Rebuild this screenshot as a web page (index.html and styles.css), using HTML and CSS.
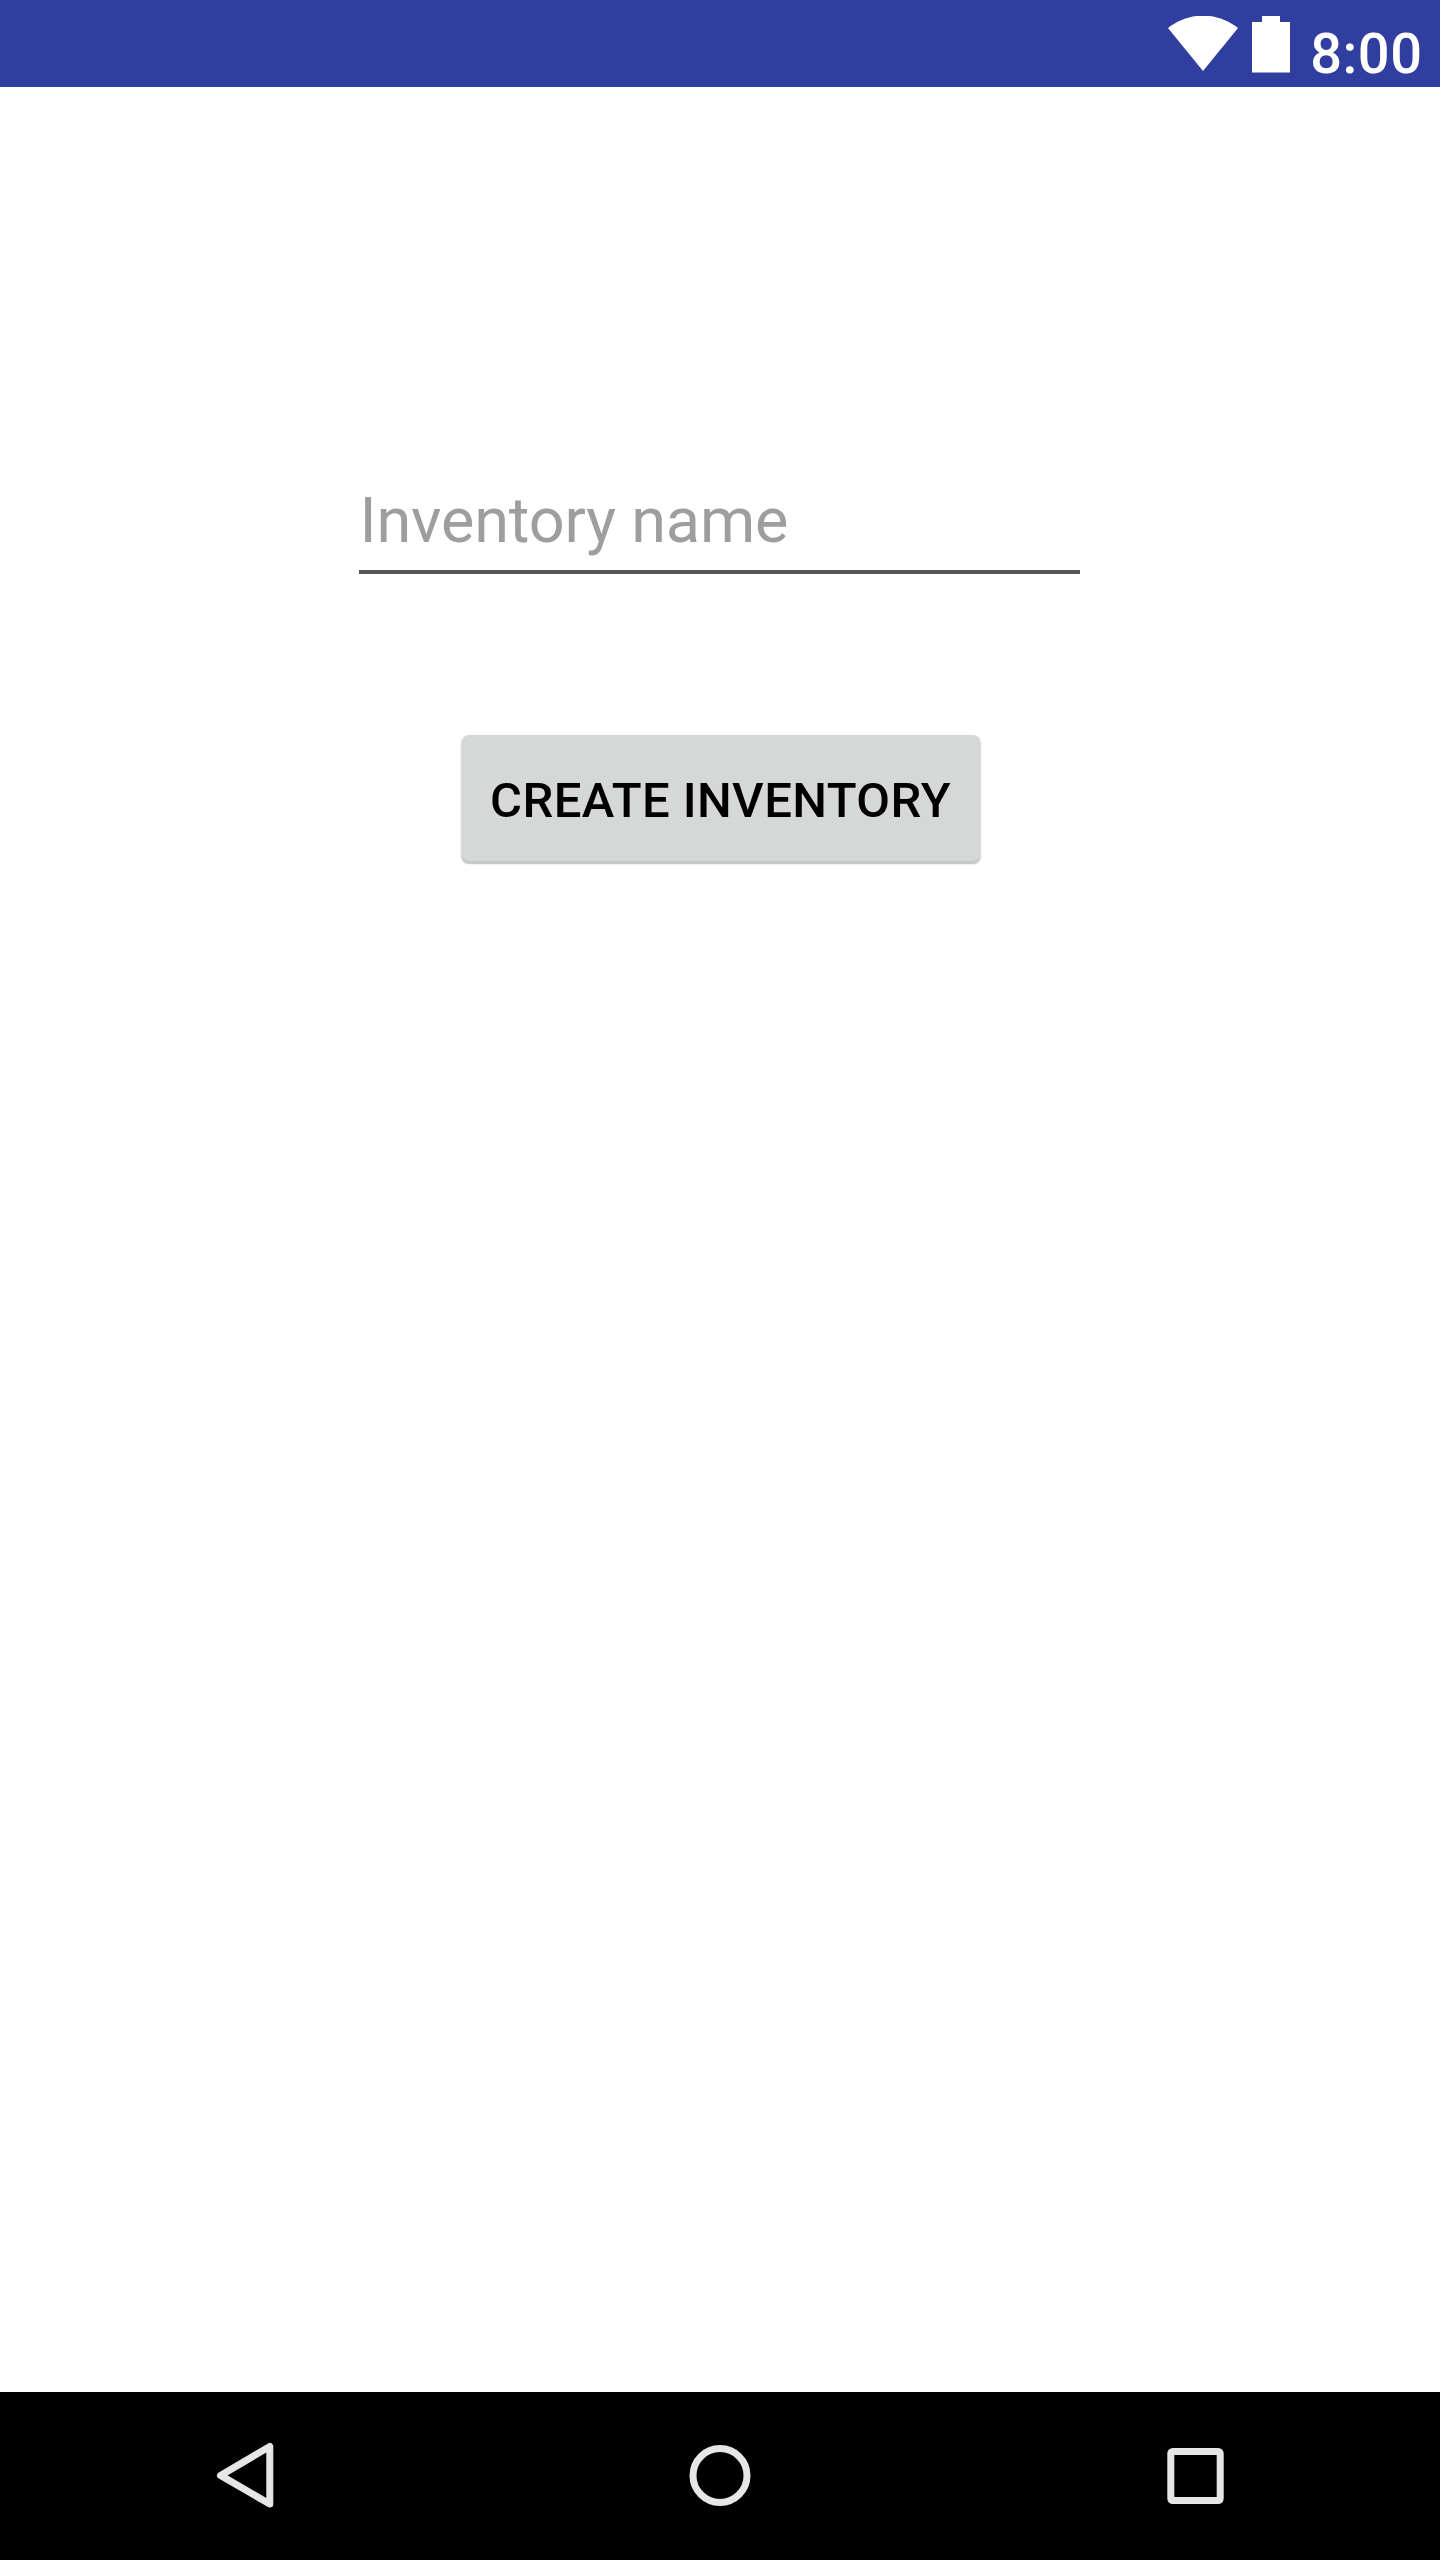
FILE: index.html
```html
<!DOCTYPE html>
<html lang="en">
<head>
<meta charset="utf-8">
<title>Create inventory</title>
<link rel="stylesheet" href="styles.css">
</head>
<body>
<header class="status-bar">
  <svg class="wifi" width="70" height="56" viewBox="0 0 70 56"><path d="M0 12C21-4.5 49-4.5 70 12L35 55Z"/></svg>
  <svg class="battery" width="38" height="57" viewBox="0 0 38 57"><path d="M10 0h18v6h10v50.5H0V6h10z"/></svg>
  <span class="clock">8:00</span>
</header>
<main class="content">
  <input class="name-field" type="text" placeholder="Inventory name" aria-label="Inventory name">
  <button class="create-button" type="button">CREATE INVENTORY</button>
</main>
<nav class="nav-bar">
  <svg class="nav-icon" width="84" height="84" viewBox="0 0 84 84"><path d="M66.8 12.5V70L17.5 41.4z"/></svg>
  <svg class="nav-icon" width="84" height="84" viewBox="0 0 84 84"><circle cx="42" cy="41.5" r="27"/></svg>
  <svg class="nav-icon" width="84" height="84" viewBox="0 0 84 84"><rect x="17.8" y="17.5" width="49.4" height="49" rx="2"/></svg>
</nav>
</body>
</html>
```
FILE: styles.css
```css
* { box-sizing: border-box; }
body {
  margin: 0;
  height: 2560px;
  display: flex;
  flex-direction: column;
  background: #fff;
  font-family: Roboto, sans-serif;
}
.status-bar {
  height: 87px;
  flex: none;
  display: flex;
  justify-content: flex-end;
  align-items: flex-start;
  padding: 16px 17.5px 0 0;
  background: #303f9f;
  color: #fff;
  fill: #fff;
}
.battery { margin-left: 14px; }
.clock {
  width: 114px;
  margin-left: 18.5px;
  padding-top: 5px;
  font-size: 56px;
  font-weight: 500;
  line-height: 66px;
  letter-spacing: .5px;
  text-align: right;
}
.content {
  flex: 1;
  display: flex;
  flex-direction: column;
  align-items: center;
  padding-top: 379px;
}
.name-field {
  width: 721px;
  height: 108px;
  margin-right: 1px;
  padding: 4px 0 0 .5px;
  border: 0;
  border-bottom: 4px solid #555;
  outline: 0;
  background: none;
  font: 400 63px/74px Roboto, sans-serif;
  letter-spacing: -.18px;
}
.name-field::placeholder { color: #9e9e9e; opacity: 1; }
.create-button {
  width: 518px;
  height: 126px;
  margin: 161px 0 0 1px;
  padding: 5px 0 0;
  border: 0;
  border-radius: 7px;
  background: #d6d8d7;
  box-shadow: 0 3px 0 #c8c9c9, 0 2px 2px 1px rgba(0, 0, 0, .18);
  color: #000;
  font: 500 49px/58px Roboto, sans-serif;
  letter-spacing: .42px;
  white-space: nowrap;
}
.nav-bar {
  height: 168px;
  flex: none;
  display: flex;
  justify-content: space-between;
  align-items: center;
  padding: 0 203px;
  background: #000;
}
.nav-icon { fill: none; stroke: #e6e6e6; stroke-width: 7; stroke-linejoin: round; }
```
